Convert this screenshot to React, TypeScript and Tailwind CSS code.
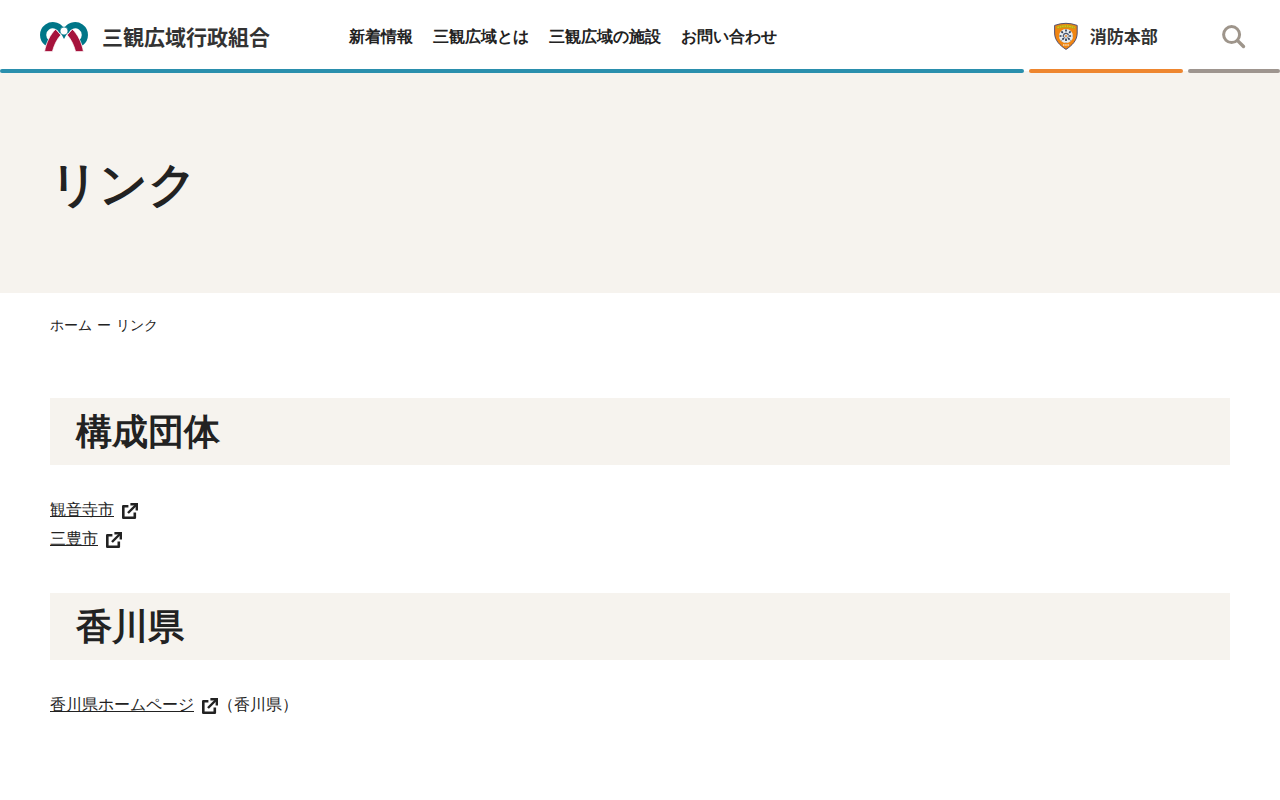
import type { ReactNode } from "react";

const navItems = ["新着情報", "三観広域とは", "三観広域の施設", "お問い合わせ"];

function Logo() {
  return (
    <svg width="48" height="30" viewBox="0 0 48 30" fill="none" aria-hidden="true" className="shrink-0">
      <path d="M7.2 21 A9.8 9.8 0 1 1 22.3 10.2" stroke="#007688" strokeWidth="6.2" />
      <path d="M40.8 21 A9.8 9.8 0 1 0 25.7 10.2" stroke="#007688" strokeWidth="6.2" />
      <path d="M20 9.5 L24 17 L28 9.5 Z" fill="#007688" />
      <path d="M4.6 29.6 C6 21 10.2 12.5 15.6 7.3 L20.8 13 C16.8 17.5 14 23.2 12.4 29.6 Z" fill="#a6133c" stroke="#fff" strokeWidth="0.7" />
      <path d="M43.4 29.6 C42 21 37.8 12.5 32.4 7.3 L27.2 13 C31.2 17.5 34 23.2 35.6 29.6 Z" fill="#a6133c" stroke="#fff" strokeWidth="0.7" />
      <circle cx="24" cy="9" r="4" fill="#fff" stroke="#007688" strokeWidth="0.7" />
    </svg>
  );
}

function FireEmblem() {
  return (
    <svg width="24" height="28" viewBox="0 0 24 28" fill="none" aria-hidden="true" className="shrink-0">
      <path d="M0.6 3.4 Q12 -0.8 23.2 3.4 V11 C23.2 18.5 18 23.5 12 27.4 C6 23.5 0.6 18.5 0.6 11 Z" fill="#f08512" stroke="#3f4470" strokeWidth="0.9" />
      <path d="M2.8 5.8 Q12 2.6 21.2 5.8" stroke="#b9a817" strokeWidth="2.8" />
      <path d="M3.5 5.6 Q12 2.6 20.5 5.6" stroke="#e4c51d" strokeWidth="1.2" strokeDasharray="1.4 1" />
      <circle cx="12" cy="14" r="7" fill="#e6edf2" />
      <path d="M12 7.5 V20.5 M5.5 14 H18.5 M7.4 9.4 L16.6 18.6 M16.6 9.4 L7.4 18.6" stroke="#2f3b52" strokeWidth="1.7" strokeDasharray="2 1.2" />
      <circle cx="12" cy="14" r="2.3" fill="#fff" stroke="#2f3b52" strokeWidth="0.6" />
      <circle cx="12" cy="14" r="1" fill="#e8851b" />
      <path d="M9 23 H15" stroke="#f7dfc0" strokeWidth="1.4" strokeDasharray="1.5 0.7" />
    </svg>
  );
}

function ExternalIcon() {
  return (
    <svg width="16" height="16" viewBox="0 0 16 16" fill="none" aria-hidden="true" className="mt-[3px] ml-2 shrink-0">
      <path d="M6.4 3.2 H1.3 V14.7 H12.8 V9.6" stroke="#222" strokeWidth="2.6" strokeLinejoin="round" />
      <path d="M6 10 L14 2" stroke="#222" strokeWidth="2.4" />
      <path d="M8.4 1.2 H14.8 V7.6" stroke="#222" strokeWidth="2.4" />
    </svg>
  );
}

function ExternalLink({ label, note }: { label: string; note?: string }) {
  return (
    <li className="flex items-center">
      <a href="#" className="flex items-center">
        <span className="underline">{label}</span>
        <ExternalIcon />
      </a>
      {note}
    </li>
  );
}

function Section({ title, children }: { title: string; children: ReactNode }) {
  return (
    <section className="mb-10">
      <h2 className="mb-[30px] bg-[#f6f3ee] px-[26px] pt-[7px] pb-1.5 text-4xl leading-[54px] font-bold">{title}</h2>
      <ul className="leading-[29px]">{children}</ul>
    </section>
  );
}

export default function App() {
  return (
    <div className="min-h-screen bg-white font-['Liberation_Sans',sans-serif] text-base text-[#222]">
      <header className="flex gap-[5px] bg-[linear-gradient(to_top,#f6f3ee_2px,#fff_2px)]">
        <div className="w-4/5">
          <div className="flex h-[69px] items-center pt-1 pl-10">
            <a href="#" className="flex items-center gap-[14px] font-['Noto_Sans_CJK_JP',sans-serif] text-[21px] font-bold whitespace-nowrap text-[#333]">
              <Logo />
              三観広域行政組合
            </a>
            <nav className="ml-[79px]">
              <ul className="flex gap-5 font-bold whitespace-nowrap">
                {navItems.map((item) => (
                  <li key={item}>
                    <a href="#">{item}</a>
                  </li>
                ))}
              </ul>
            </nav>
          </div>
          <div className="h-1 rounded-full bg-[#2a8fad]" />
        </div>
        <div className="w-[12%]">
          <a href="#" className="flex h-[69px] items-center justify-center gap-3 pt-[3px] font-['Noto_Sans_CJK_JP',sans-serif] text-[17px] font-bold whitespace-nowrap text-[#333]">
            <FireEmblem />
            消防本部
          </a>
          <div className="h-1 rounded-full bg-[#ee862f]" />
        </div>
        <div className="flex-1">
          <button type="button" aria-label="検索" className="flex h-[69px] w-full items-center justify-center pt-1">
            <svg width="24" height="24" viewBox="0 0 24 24" fill="none" stroke="#9e958b" strokeWidth="3" strokeLinecap="round" aria-hidden="true">
              <circle cx="9.6" cy="9.6" r="8" />
              <path d="M15.6 15.6 L21.5 21.5" strokeWidth="3.4" />
            </svg>
          </button>
          <div className="h-1 rounded-full bg-[#9e958f]" />
        </div>
      </header>

      <div className="flex h-[220px] items-center bg-[#f6f3ee] px-[50px] pt-1">
        <h1 className="text-5xl font-bold">リンク</h1>
      </div>

      <main className="px-[50px]">
        <nav aria-label="パンくず" className="pt-5 pb-[60px] text-sm leading-[25px]">
          <ol className="flex gap-[5px]">
            <li>
              <a href="#">ホーム</a>
            </li>
            <li aria-hidden="true">ー</li>
            <li>リンク</li>
          </ol>
        </nav>
        <Section title="構成団体">
          <ExternalLink label="観音寺市" />
          <ExternalLink label="三豊市" />
        </Section>
        <Section title="香川県">
          <ExternalLink label="香川県ホームページ" note="（香川県）" />
        </Section>
      </main>
    </div>
  );
}
